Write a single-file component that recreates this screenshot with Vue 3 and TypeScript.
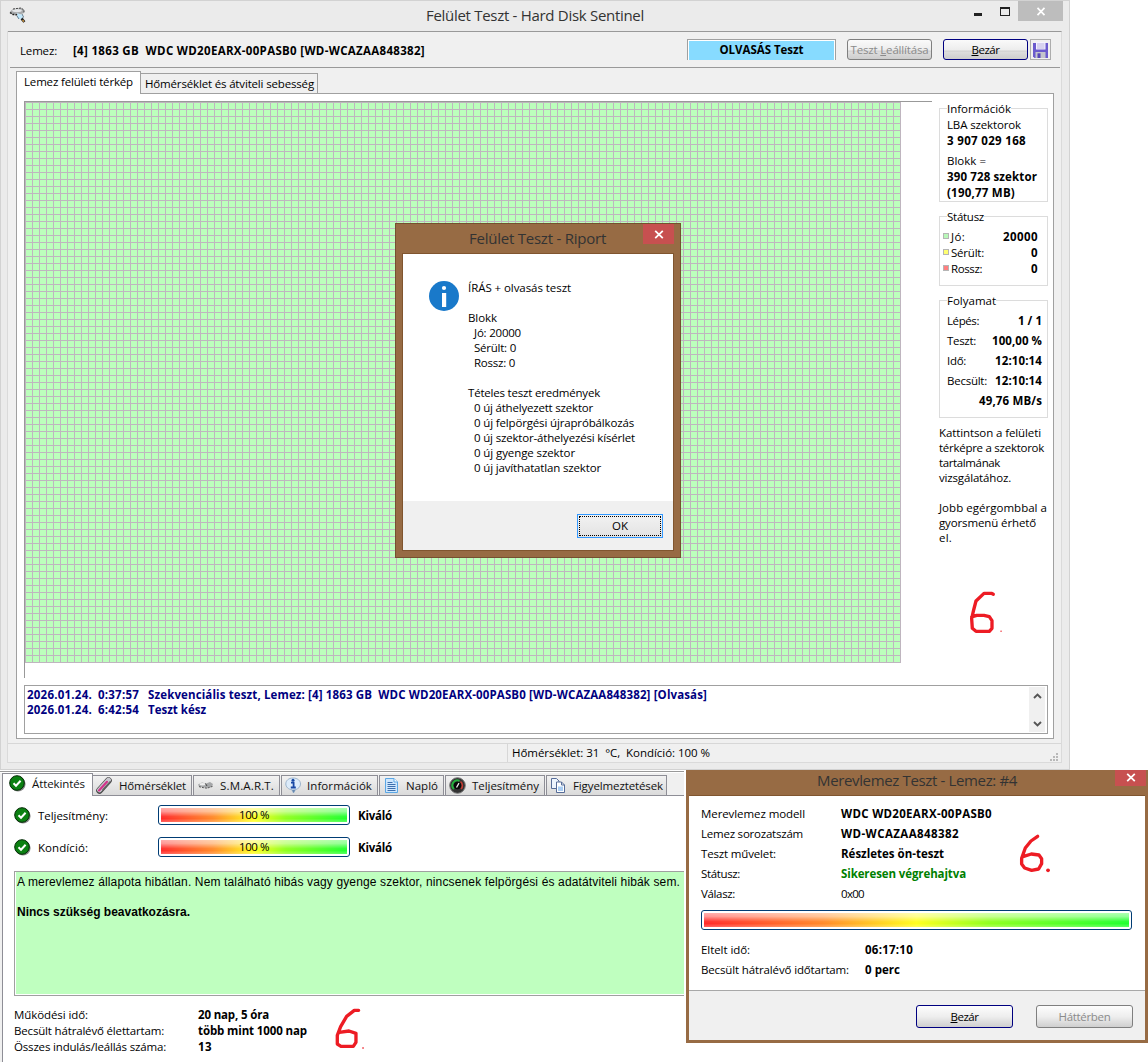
<script setup lang="ts">
import type { Directive } from 'vue'

// Spreads a label's letters so that it takes the given width in pixels.
const vFit: Directive<HTMLElement, number> = {
  mounted(el, { value }) {
    const count = (el.textContent ?? '').length
    const natural = el.getBoundingClientRect().width
    if (count > 0) el.style.letterSpacing = `${(value - natural) / count}px`
  },
}

interface Cell { text: string; w: number }
interface Row { label: Cell; value: Cell; tone?: string }

const c = (text: string, w: number): Cell => ({ text, w })

const info: (Cell & { bold?: boolean; gap?: boolean })[] = [
  { text: 'LBA szektorok', w: 74 },
  { text: '3 907 029 168', w: 79, bold: true },
  { text: 'Blokk =', w: 39, gap: true },
  { text: '390 728 szektor', w: 90, bold: true },
  { text: '(190,77 MB)', w: 68, bold: true },
]
const status: Row[] = [
  { label: c('Jó:', 14), value: c('20000', 35), tone: 'good' },
  { label: c('Sérült:', 33), value: c('0', 7), tone: 'damaged' },
  { label: c('Rossz:', 31), value: c('0', 7), tone: 'bad' },
]
const progress: Row[] = [
  { label: c('Lépés:', 32), value: c('1 / 1', 24) },
  { label: c('Teszt:', 29), value: c('100,00 %', 50) },
  { label: c('Idő:', 19), value: c('12:10:14', 47) },
  { label: c('Becsült:', 40), value: c('12:10:14', 47) },
  { label: c('', 0), value: c('49,76 MB/s', 63) },
]
const help: Cell[] = [
  c('Kattintson a felületi', 102), c('térképre a szektorok', 105), c('tartalmának', 61),
  c('vizsgálatához.', 72), c('', 0), c('Jobb egérgombbal a', 108), c('gyorsmenü érhető', 97), c('el.', 13),
]
const log = [
  { date: '2026.01.24.', time: '0:37:57', msg: c('Szekvenciális teszt, Lemez: [4] 1863 GB\u00a0 WDC WD20EARX-00PASB0 [WD-WCAZAA848382] [Olvasás]', 559) },
  { date: '2026.01.24.', time: '6:42:54', msg: c('Teszt kész', 58) },
]
const report: (Cell & { sub?: boolean })[] = [
  { text: 'ÍRÁS + olvasás teszt', w: 103 },
  { text: '', w: 0 },
  { text: 'Blokk', w: 29 },
  { text: 'Jó: 20000', w: 47, sub: true },
  { text: 'Sérült: 0', w: 42, sub: true },
  { text: 'Rossz: 0', w: 41, sub: true },
  { text: '', w: 0 },
  { text: 'Tételes teszt eredmények', w: 132 },
  { text: '0 új áthelyezett szektor', w: 119, sub: true },
  { text: '0 új felpörgési újrapróbálkozás', w: 160, sub: true },
  { text: '0 új szektor-áthelyezési kísérlet', w: 161, sub: true },
  { text: '0 új gyenge szektor', w: 101, sub: true },
  { text: '0 új javíthatatlan szektor', w: 127, sub: true },
]
const meters = [
  { label: c('Teljesítmény:', 70), value: '100 %' },
  { label: c('Kondíció:', 50), value: '100 %' },
]
const stats: Row[] = [
  { label: c('Működési idő:', 74), value: c('20 nap, 5 óra', 71) },
  { label: c('Becsült hátralévő élettartam:', 150), value: c('több mint 1000 nap', 109) },
  { label: c('Összes indulás/leállás száma:', 152), value: c('13', 14) },
]
const details: Row[] = [
  { label: c('Merevlemez modell', 104), value: c('WDC WD20EARX-00PASB0', 151) },
  { label: c('Lemez sorozatszám', 102), value: c('WD-WCAZAA848382', 118) },
  { label: c('Teszt művelet:', 75), value: c('Részletes ön-teszt', 103) },
  { label: c('Státusz:', 39), value: c('Sikeresen végrehajtva', 125), tone: 'ok' },
  { label: c('Válasz:', 34), value: c('0x00', 23), tone: 'plain' },
]
const times: Row[] = [
  { label: c('Eltelt idő:', 49), value: c('06:17:10', 48) },
  { label: c('Becsült hátralévő időtartam:', 148), value: c('0 perc', 35) },
]
</script>

<template>
  <div class="screen">
    <section class="win">
      <header class="titlebar">
        <svg class="app-icon" width="18" height="18" viewBox="0 0 18 18">
          <path d="M1 4.5 L4 2 L12 1 L15 3 L15 6 L10 8 L3 7 Z" fill="#a8aaac" />
          <ellipse cx="8" cy="3.6" rx="4.8" ry="1.6" fill="#e4e6e8" />
          <path d="M1 5.5 L4 7.5 L10 8" fill="none" stroke="#222" stroke-width="1.5" stroke-dasharray="2 1" />
          <path d="M4 2 L12 1 L15 3 V6" fill="none" stroke="#444" stroke-dasharray="2 1" />
          <path d="M8 6 L13 8 L13 12 L9 11 Z" fill="#bfe6fb" />
          <path d="M13 7 L14.5 10 L12.5 12 M8 9 L10 12" fill="none" stroke="#5d7f96" />
          <path d="M12.6 11.6 L15.4 15" stroke="#222" stroke-width="2.6" />
          <path d="M13.6 13 L14.8 14.6" stroke="#d89a3c" stroke-width="1.3" />
        </svg>
        <span class="title" v-fit="218">Felület Teszt - Hard Disk Sentinel</span>
        <div class="controls">
          <i class="min"></i><i class="max"></i>
          <div class="close gray"><svg width="10" height="9" viewBox="0 0 10 9"><path d="M1.5 .8 L8.5 8.2 M8.5 .8 L1.5 8.2" stroke="#fff" stroke-width="1.7" /></svg></div>
        </div>
      </header>

      <div class="client">
        <div class="toolbar">
          <span class="disk-label" v-fit="37">Lemez:</span>
          <span class="disk-name b" v-fit="352">[4] 1863 GB&nbsp; WDC WD20EARX-00PASB0 [WD-WCAZAA848382]</span>
          <div class="mode"><div><span class="b" v-fit="84">OLVASÁS Teszt</span></div></div>
          <div class="btn split off"><span v-fit="78">Teszt <u>L</u>eállítása</span></div>
          <div class="btn split main"><span v-fit="28"><u>B</u>ezár</span></div>
          <div class="save">
            <svg width="15" height="16" viewBox="0 0 15 16">
              <path d="M0 1 H15 V16 H1.5 L0 14.5 Z" fill="#6a5acd" />
              <rect x="3" y="0" width="9.5" height="7.5" fill="#f4f2ff" />
              <path d="M4 2 H11.5 M4 4 H11.5 M4 6 H11.5" stroke="#a9a2d8" stroke-width=".8" />
              <path d="M2.5 10 H12.5 V16 H2.5 Z" fill="#c3c4cc" />
              <rect x="4.5" y="11.3" width="3" height="4.7" fill="#5546b8" />
            </svg>
          </div>
        </div>

        <div class="tabs">
          <div class="tab on"><span v-fit="109">Lemez felületi térkép</span></div>
          <div class="tab"><span v-fit="169">Hőmérséklet és átviteli sebesség</span></div>
        </div>

        <div class="panel">
          <div class="upper">
            <div class="map"><div class="cells"></div></div>
            <aside class="side">
              <div class="group g1">
                <div class="legend"><span v-fit="64">Információk</span></div>
                <div v-for="r in info" :key="r.text" class="line" :class="{ gap: r.gap }"><span :class="{ b: r.bold }" v-fit="r.w">{{ r.text }}</span></div>
              </div>
              <div class="group g2">
                <div class="legend"><span v-fit="37">Státusz</span></div>
                <div v-for="r in status" :key="r.label.text" class="srow">
                  <i class="swatch" :class="r.tone"></i>
                  <span v-fit="r.label.w">{{ r.label.text }}</span>
                  <span class="b end" v-fit="r.value.w">{{ r.value.text }}</span>
                </div>
              </div>
              <div class="group g3">
                <div class="legend"><span v-fit="49">Folyamat</span></div>
                <div v-for="r in progress" :key="r.label.text" class="prow">
                  <span v-fit="r.label.w">{{ r.label.text }}</span>
                  <span class="b end" v-fit="r.value.w">{{ r.value.text }}</span>
                </div>
              </div>
              <div class="help">
                <div v-for="(r, i) in help" :key="i"><span v-fit="r.w">{{ r.text }}</span></div>
              </div>
            </aside>
          </div>
          <div class="log">
            <div class="entries">
              <div v-for="r in log" :key="r.time" class="entry b">
                <span class="date" v-fit="65">{{ r.date }}</span>
                <div class="time"><span v-fit="41">{{ r.time }}</span></div>
                <span v-fit="r.msg.w">{{ r.msg.text }}</span>
              </div>
            </div>
            <div class="scroll">
              <svg width="9" height="6" viewBox="0 0 9 6"><path d="M1 5 L4.5 1.5 L8 5" fill="none" stroke="#555" stroke-width="1.9" /></svg>
              <svg width="9" height="6" viewBox="0 0 9 6"><path d="M1 1 L4.5 4.5 L8 1" fill="none" stroke="#555" stroke-width="1.9" /></svg>
            </div>
          </div>
        </div>

        <footer class="statusbar">
          <span v-fit="198">Hőmérséklet: 31&nbsp; °C,&nbsp; Kondíció: 100 %</span>
          <svg class="grip" width="9" height="9" viewBox="0 0 9 9" fill="#b8b8b8">
            <path d="M6 0h2v2h-2z M3 3h2v2h-2z M6 3h2v2h-2z M0 6h2v2h-2z M3 6h2v2h-2z M6 6h2v2h-2z" />
          </svg>
        </footer>
      </div>
    </section>

    <div class="bottom">
      <section class="overview">
        <nav class="nav">
          <div class="ntab on">
            <svg width="17" height="17" viewBox="0 0 17 17"><circle cx="9" cy="9" r="7.6" fill="#888" /><circle cx="8" cy="8" r="7.3" fill="#0c8012" stroke="#032a05" /><path d="M4.5 8.2 L7 10.7 L11.6 5.7" fill="none" stroke="#fff" stroke-width="2" /></svg>
            <span v-fit="53">Áttekintés</span>
          </div>
          <div class="ntab n1">
            <svg width="17" height="17" viewBox="0 0 17 17"><path d="M3.5 13.5 L12.5 3.5" stroke="#4a4a4a" stroke-width="6.6" stroke-linecap="round" /><path d="M3.5 13 L12.5 3" stroke="#c9c9d0" stroke-width="4.8" stroke-linecap="round" /><path d="M3 13.4 L11 4.8" stroke="#d4338c" stroke-width="2.2" stroke-linecap="round" /><path d="M6.5 13 L14.3 4.5" stroke="#666" stroke-width="1.2" /></svg>
            <span v-fit="67">Hőmérséklet</span>
          </div>
          <div class="ntab n2">
            <svg width="17" height="17" viewBox="0 0 17 17"><path d="M1 7.5 L5 5.5 L9 6.5 L13 5 L16 7 L15 9.5 L10 11 L6 10 L2 9.5 Z" fill="#a4a6a8" /><ellipse cx="5.5" cy="7.3" rx="3" ry="1.2" fill="#eee" /><path d="M2 9.6 L6 10.6 L10 11.2 L15.5 9.4" fill="none" stroke="#555" stroke-dasharray="2 1" /><path d="M8.5 6.5 L10 9" stroke="#444" /></svg>
            <span v-fit="54">S.M.A.R.T.</span>
          </div>
          <div class="ntab n3">
            <svg width="17" height="17" viewBox="0 0 17 17"><path d="M8 1 C12.5 1 15.5 3.6 15.5 7 C15.5 10 13 12 10.5 12.6 L8.5 16 L7 12.8 C3.5 12.4 .8 10 .8 7 C.8 3.6 3.6 1 8 1Z" fill="#dcebfa" stroke="#9db4cc" /><path d="M10.5 12.6 L8.5 16 L7 12.8" fill="#6689b0" /><circle cx="8" cy="3.2" r="1.5" fill="#1748a5" /><path d="M6 5.7 H8.6 V10.3 M5.8 10.5 H10.8" fill="none" stroke="#1748a5" stroke-width="1.8" /></svg>
            <span v-fit="65">Információk</span>
          </div>
          <div class="ntab n4">
            <svg width="17" height="17" viewBox="0 0 17 17"><path d="M2.5 1.5 H11 L14.5 5 V15.5 H2.5 Z" fill="#cfe7fd" stroke="#5ba7e5" /><path d="M11 1.5 V5 H14.5" fill="#fff" stroke="#5ba7e5" /><path d="M4.5 5.5 H9.5 M4.5 7.5 H12.5 M4.5 9.5 H12.5 M4.5 11.5 H12.5 M4.5 13.5 H12.5" stroke="#3d6fae" /></svg>
            <span v-fit="32">Napló</span>
          </div>
          <div class="ntab n5">
            <svg width="17" height="17" viewBox="0 0 17 17"><circle cx="8.5" cy="8.5" r="7.8" fill="#333" stroke="#777" /><path d="M5 12 A5 5 0 0 1 10.5 3.8" fill="none" stroke="#23b13c" stroke-width="2" /><path d="M11.5 4.6 A5 5 0 0 1 12 12" fill="none" stroke="#c43a30" stroke-width="1.6" /><circle cx="8.5" cy="8.5" r="3.7" fill="#080808" /><path d="M7.5 10.5 L10 6.2" stroke="#eee" stroke-width="1.3" /></svg>
            <span v-fit="67">Teljesítmény</span>
          </div>
          <div class="ntab n6">
            <svg width="17" height="17" viewBox="0 0 17 17"><path d="M1.5 1.5 H6.5 L9 4 V11.5 H1.5 Z" fill="#edf4fd" stroke="#566c98" /><path d="M6.5 5 H11.5 L14.5 8 V15.5 H6.5 Z" fill="#fff" stroke="#566c98" /><path d="M11.5 5 V8 H14.5" fill="none" stroke="#566c98" /><path d="M8 9.5 H13 V14 H8 Z" fill="#a9cdf3" /></svg>
            <span v-fit="90">Figyelmeztetések</span>
          </div>
        </nav>
        <div class="body">
          <div v-for="m in meters" :key="m.label.text" class="meter">
            <svg width="17" height="17" viewBox="0 0 17 17"><circle cx="9" cy="9" r="7.6" fill="#888" /><circle cx="8" cy="8" r="7.3" fill="#0c8012" stroke="#032a05" /><path d="M4.5 8.2 L7 10.7 L11.6 5.7" fill="none" stroke="#fff" stroke-width="2" /></svg>
            <div class="mlabel"><span v-fit="m.label.w">{{ m.label.text }}</span></div>
            <div class="bar"><div><span v-fit="30">{{ m.value }}</span></div></div>
            <span class="b" v-fit="34">Kiváló</span>
          </div>
          <div class="message">
            <div><span v-fit="663">A merevlemez állapota hibátlan. Nem található hibás vagy gyenge szektor, nincsenek felpörgési és adatátviteli hibák sem.</span></div>
            <div class="second"><span v-fit="173">Nincs szükség beavatkozásra.</span></div>
          </div>
          <div class="stats">
            <div v-for="r in stats" :key="r.label.text" class="stat">
              <div class="slabel"><span v-fit="r.label.w">{{ r.label.text }}</span></div>
              <span class="b" v-fit="r.value.w">{{ r.value.text }}</span>
            </div>
          </div>
        </div>
      </section>

      <section class="test">
        <header class="ttitle">
          <span class="title" v-fit="200">Merevlemez Teszt - Lemez: #4</span>
          <div class="close red"><svg width="10" height="9" viewBox="0 0 10 9"><path d="M1.2 .8 L8.8 8.2 M8.8 .8 L1.2 8.2" stroke="#fff" stroke-width="1.8" /></svg></div>
        </header>
        <div class="tbody">
          <div v-for="r in details" :key="r.label.text" class="drow">
            <div class="dlabel"><span v-fit="r.label.w">{{ r.label.text }}</span></div>
            <span class="b" :class="r.tone" v-fit="r.value.w">{{ r.value.text }}</span>
          </div>
          <div class="bar wide"><div></div></div>
          <div v-for="r in times" :key="r.label.text" class="drow">
            <div class="dlabel far"><span v-fit="r.label.w">{{ r.label.text }}</span></div>
            <span class="b" v-fit="r.value.w">{{ r.value.text }}</span>
          </div>
        </div>
        <div class="tfoot">
          <div class="btn main"><span v-fit="28"><u>B</u>ezár</span></div>
          <div class="btn off"><span v-fit="52">Háttérben</span></div>
        </div>
      </section>
    </div>

    <section class="modal">
      <header class="mtitle">
        <span class="title" v-fit="137">Felület Teszt - Riport</span>
        <div class="close red"><svg width="10" height="9" viewBox="0 0 10 9"><path d="M1.2 .8 L8.8 8.2 M8.8 .8 L1.2 8.2" stroke="#fff" stroke-width="1.8" /></svg></div>
      </header>
      <div class="mbox">
        <div class="mcontent">
          <svg width="30" height="30" viewBox="0 0 30 30"><circle cx="15" cy="15" r="15" fill="#1979ca" /><circle cx="15" cy="7" r="2.1" fill="#fff" /><rect x="13" y="12" width="4.2" height="14" fill="#fff" /></svg>
          <div class="report">
            <div v-for="(r, i) in report" :key="i" :class="{ sub: r.sub }"><span v-fit="r.w">{{ r.text }}</span></div>
          </div>
        </div>
        <div class="mfoot"><div class="ok-btn"><div><span v-fit="16">OK</span></div></div></div>
      </div>
    </section>

    <svg class="ink" width="1148" height="1062" viewBox="0 0 1148 1062" fill="none" stroke="#ed1c24" stroke-linecap="round" stroke-linejoin="round">
      <g transform="translate(880 570) scale(.3333)" stroke-width="10">
        <path d="M340 73 L334 70 H312 L288 93 L281 120 L275 146 L277 175 L288 184 H328 L336 175 V152 L328 140 L312 136 H290 L275 141" />
        <path d="M363 183.5 h.5" stroke-width="4" />
      </g>
      <g transform="translate(680 765) scale(.3333)" stroke-width="10">
        <path d="M1073 214 L1053 228 L1036 249 L1025 280 V297 L1034 309 L1055 316 L1076 312 L1085 296 V281 L1077 270 L1054 267 L1029 275" />
        <path d="M1104 316 h.5" stroke-width="11" />
      </g>
      <g transform="translate(0 970) scale(.3333)" stroke-width="10">
        <path d="M1076 121 H1063 L1040 139 L1022 170 L1012 196 V222 L1023 229 H1060 L1068 217 V190 L1047 183 L1018 187" />
        <path d="M1089 234 h.5" stroke-width="5" />
      </g>
    </svg>
  </div>
</template>

<style>
body { margin: 0; background: #fff; }
</style>

<style scoped>
* { box-sizing: border-box; }
.screen { position: relative; width: 1148px; height: 1062px; overflow: hidden; background: #fff; font: 11.5px/16px "Open Sans", "Noto Sans", sans-serif; color: #000; }
span { display: inline-block; width: max-content; flex: none; white-space: pre; vertical-align: top; }
svg { display: block; flex: none; }
u { text-underline-offset: 1px; }
.b { font-weight: 700; }
.title { font-size: 15px; line-height: 20px; color: #333; }

.win { width: 1070px; height: 770px; background: #ebebeb; border: 1px solid #d2d2d2; padding: 0 7px; }
.titlebar { display: flex; height: 30px; }
.app-icon { margin: 6px 0 0 1px; width: 18px; }
.titlebar .title { margin: 4px 0 0 399px; }
.controls { display: flex; margin-left: auto; margin-right: -1px; }
.min { width: 8px; height: 3px; background: #222; margin: 12px 18px 0 0; }
.max { width: 10px; height: 9px; border: 1px solid #222; border-top-width: 2px; margin: 6px 8px 0 0; }
.close { display: flex; align-items: center; justify-content: center; width: 45px; height: 20px; }
.gray { background: #bdbdbd; }
.red { background: #c75050; }

.client { height: 732px; background: #f0f0f0; border: 1px solid #dadada; border-width: 1px 1px 1px 0; border-top-color: #999; box-shadow: -1px 0 #dadada; }
.toolbar { display: flex; height: 36px; margin: 0 1px 0 2px; border-bottom: 1px solid #999; padding: 7px 9px 0 10px; }
.toolbar > span { margin-top: 4px; }
.disk-name { margin-left: 16px; }
.mode { width: 149px; height: 21px; margin-left: auto; margin-right: 11px; border: 1px solid #a0a0a0; border-bottom: 0; padding: 1px; background: #fff; }
.mode div { height: 19px; background: #87dbff; display: flex; justify-content: center; line-height: 18px; }
.mode span { line-height: 18px; }
.btn { display: flex; align-items: center; justify-content: center; width: 97px; height: 23px; border: 1px solid #7f7f7f; border-radius: 3px; background: linear-gradient(#fdfdfd, #eee 50%, #cfcfcf); }
.btn.main { border-color: #000080; }
.btn.off { color: #8b8b8b; }
.split { width: 85px; height: 21px; background: linear-gradient(#fafafa, #ececec 55%, #b8b8b8 56%, #dedede 62%, #cdcdcd); }
.split.main { margin: 0 2px 0 11px; }
.save { width: 21px; height: 21px; border: 1px solid #adadad; padding: 2px; }

.tabs { display: flex; align-items: flex-end; height: 25px; padding-left: 8px; }
.tab { width: 177px; height: 20px; border: 1px solid #a0a0a0; border-left: 0; border-bottom: 0; background: #f0f0f0; padding: 2px 0 0 4px; }
.tab.on { width: 125px; height: 23px; margin-bottom: -1px; border-left: 1px solid #a0a0a0; background: #fff; padding: 2px 0 0 7px; position: relative; }
.panel { width: 1038px; height: 646px; margin-left: 8px; background: #fff; border: 1px solid #a0a0a0; padding: 7px 5px 0 7px; }
.upper { display: flex; height: 584px; }
.map { width: 908px; height: 577px; border: 0 solid #999; border-width: 1px 0 0 1px; }
.cells { width: 876px; height: 561px; background: repeating-linear-gradient(90deg, #bfb5bf 0 1px, transparent 1px 7px), repeating-linear-gradient(#bfb5bf 0 1px, #bcffbc 1px 7px); }
.side { width: 109px; margin-left: 7px; padding-top: 7px; }
.group { border: 1px solid #dcdcdc; padding-left: 7px; }
.legend { width: max-content; background: #fff; margin-top: -8px; height: 16px; }
.g1 { height: 94px; }
.g2 { height: 70px; margin-top: 14px; }
.g3 { height: 118px; margin-top: 14px; }
.line { height: 16px; }
.line.gap { margin-top: 4px; }
.srow { display: flex; height: 16px; margin: 0 9px 0 -4px; }
.g2 .legend { margin-bottom: 4px; }
.swatch { width: 6px; height: 6px; border: 1px solid #b5b5b5; margin: 4px 2px 0 0; }
.good { background: #b8f8b8; }
.damaged { background: #ffff70; }
.bad { background: #ff7f7f; }
.end { margin-left: auto; }
.prow { display: flex; height: 20px; line-height: 20px; margin-right: 5px; }
.g3 .legend { margin-bottom: 2px; }
.help { margin-top: 7px; }
.help div { height: 15px; line-height: 15px; }
.log { display: flex; width: 1024px; height: 49px; border: 1px solid #a0a0a0; padding: 1px; }
.entries { flex: 1; padding: 0 0 0 1px; color: #000080; }
.entry { display: flex; height: 15px; line-height: 15px; }
.date { margin-right: 6px; }
.time { width: 50px; }
.scroll { width: 16px; margin-right: 1px; background: #f0f0f0; display: flex; flex-direction: column; align-items: center; justify-content: space-between; padding: 6px 0 5px; }
.statusbar { display: flex; justify-content: space-between; height: 19px; margin-top: 4px; border-top: 1px solid #d7d7d7; padding: 1px 2px 0 504px; background: linear-gradient(90deg, transparent 499px, #d7d7d7 499px 500px, transparent 500px); }
.grip { margin-top: 8px; }

.bottom { display: flex; justify-content: space-between; height: 292px; }
.overview { width: 684px; background: linear-gradient(#fff 0 1px, #999 1px 2px, #fff 2px 3px, #f0f0f0 3px); padding: 3px 0 0 2px; }
.nav { display: flex; align-items: flex-end; height: 22px; }
.ntab { display: flex; height: 20px; border: 1px solid #8e8e96; border-bottom: 0; background: linear-gradient(#f2f2f2, #dadada); padding: 2px 0 0 3px; margin-left: 1px; color: #111; }
.ntab svg { margin-top: -1px; }
.ntab.on { width: 91px; height: 23px; margin: 0 0 -1px; background: #fff; position: relative; padding: 2px 0 0 6px; }
.ntab.on svg { margin: -1px 6px 0 0; }
.n1 { width: 99px; margin-left: 0; border-left: 0; }
.n1 span { margin-left: 6px; }
.n2 { width: 87px; }
.n2 span { margin-left: 6px; }
.n3 { width: 97px; }
.n3 span { margin-left: 5px; }
.n4 { width: 65px; }
.n4 span { margin-left: 6px; }
.n5 { width: 100px; }
.n5 span { margin-left: 6px; }
.n6 { width: 121px; }
.n6 span { margin-left: 6px; }
.body { height: 267px; border: 0 solid #8e8e96; border-width: 1px 0 0 1px; background: #fff; padding: 3px 0 0 11px; }
.meter { display: flex; align-items: center; height: 32px; }
.meter svg { margin: 0 7px 0 0; }
.mlabel { width: 120px; }
.meter > span, .mlabel { margin-top: 1px; }
.bar { width: 192px; height: 20px; border: 1px solid #003c74; border-radius: 3px; padding: 2px; margin-right: 8px; background: #fff; }
.bar div { display: flex; justify-content: center; height: 14px; line-height: 14px; background: linear-gradient(rgba(255, 255, 255, .62), rgba(255, 255, 255, .5) 25%, rgba(255, 255, 255, .05) 60%, rgba(255, 255, 255, 0) 75%, rgba(255, 255, 255, .25)), linear-gradient(90deg, #ff2a2a, #ff8a2a 28%, #ffff20 50%, #90ff20 67%, #20ff30); }
.message { height: 125px; margin-top: 8px; border: 1px solid #a0a0a0; border-right: 0; background: #bfffbf; padding: 2px 0 0 2px; box-shadow: inset 1px -1px #fff; font-family: "Liberation Sans", Arial, sans-serif; font-size: 12px; }
.second { margin-top: 14px; font-weight: 700; }
.stats { margin-top: 11px; margin-left: -1px; }
.stat { display: flex; height: 16px; }
.slabel { width: 184px; margin-left: 1px; }

.test { width: 462px; height: 273px; background: #976b44; padding: 0 3px 3px; }
.ttitle { display: flex; height: 26px; border-bottom: 1px solid #80552f; }
.ttitle .title { margin: 0 0 0 128px; }
.ttitle .close { width: 31px; height: 16px; margin: 0 -1px 0 auto; align-items: center; padding-bottom: 2px; }
.tbody { height: 194px; background: #fff; padding: 8px 0 0 12px; }
.drow { display: flex; height: 20px; line-height: 20px; }
.dlabel { width: 140px; }
.dlabel.far { width: 164px; }
.ok { color: #008000; }
.plain { font-weight: 400; }
.wide { width: 431px; margin: 6px 0 10px; }
.tfoot { display: flex; gap: 23px; height: 50px; background: #f0f0f0; border-top: 1px solid #a8a8a8; padding: 14px 0 0 227px; }

.modal { position: absolute; left: 395px; top: 223px; width: 286px; height: 335px; background: #976b44; border: 1px solid #74502f; padding: 0 6px 6px; }
.mtitle { display: flex; height: 29px; }
.mtitle .title { margin: 4px 0 0 67px; }
.mtitle .close { width: 31px; margin: 0 0 0 auto; }
.mbox { height: 298px; border: 1px solid #80552f; background: #fff; }
.mcontent { display: flex; height: 247px; padding: 27px 0 0 26px; }
.report { margin: -1px 0 0 9px; line-height: 15px; }
.report div { height: 15px; }
.report .sub { padding-left: 6px; }
.mfoot { height: 49px; background: #f0f0f0; padding: 13px 0 0 174px; }
.ok-btn { width: 86px; height: 24px; border: 1px solid #3399ff; padding: 1px; background: linear-gradient(#f2f2f2, #e3e3e3); }
.ok-btn div { height: 20px; border: 1px dotted #000; display: flex; justify-content: center; line-height: 17px; }

.ink { position: absolute; left: 0; top: 0; pointer-events: none; }
</style>
